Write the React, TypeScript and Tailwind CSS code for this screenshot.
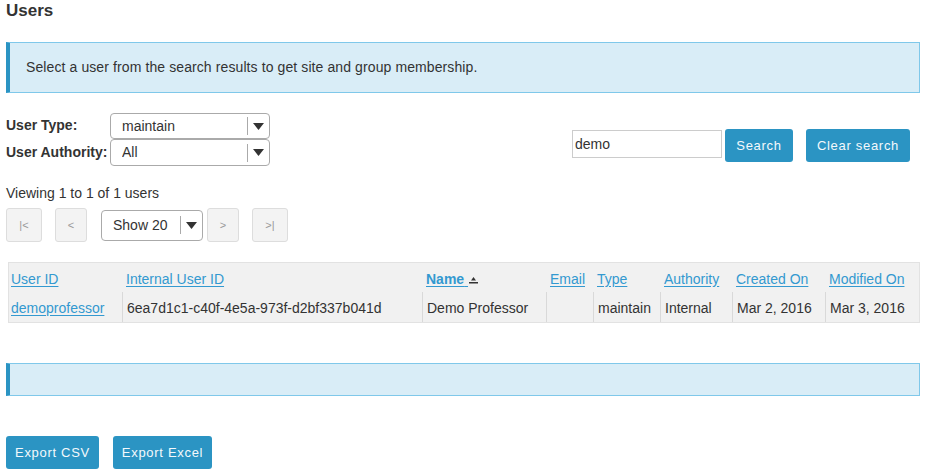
import React from "react";

const link = "text-[#3399d0] underline underline-offset-2";

function Select({ value, className }: { value: string; className: string }) {
  return (
    <div className={`flex items-center rounded-[4px] border border-[#aaa] bg-white ${className}`}>
      <span className="flex-1 truncate">{value}</span>
      <span className="h-[18px] border-l border-[#aaa]" />
      <span className="flex w-[21px] justify-center">
        <svg width="11" height="7" viewBox="0 0 11 7">
          <path d="M0 0h11L5.5 7z" fill="#333" />
        </svg>
      </span>
    </div>
  );
}

function PageBtn({ label, className }: { label: string; className: string }) {
  return (
    <div className={`flex h-[34px] items-center justify-center rounded-[3px] border border-[#ddd] bg-[#f3f3f3] text-[11px] text-[#999] ${className}`}>
      {label}
    </div>
  );
}

function Btn({ label, className = "" }: { label: string; className?: string }) {
  return (
    <button className={`h-[33px] shrink-0 whitespace-nowrap rounded-[3px] bg-[#2b94c3] text-center text-[13px] tracking-[0.7px] text-[#f4f9fc] antialiased ${className}`}>
      {label}
    </button>
  );
}

const cols = [
  { h: "User ID", v: "demoprofessor", w: "w-[113px] pl-[2px]", link: true },
  { h: "Internal User ID", v: "6ea7d1c1-c40f-4e5a-973f-d2bf337b041d", w: "w-[300px] pl-[4px]" },
  { h: "Name", v: "Demo Professor", w: "w-[124px] pl-[4px]", sort: true },
  { h: "Email", v: "", w: "w-[47px] pl-[4px]" },
  { h: "Type", v: "maintain", w: "w-[67px] pl-[4px]" },
  { h: "Authority", v: "Internal", w: "w-[72px] pl-[4px]" },
  { h: "Created On", v: "Mar 2, 2016", w: "w-[93px] pl-[4px]" },
  { h: "Modified On", v: "Mar 3, 2016", w: "flex-1 pl-[4px]" },
];

export default function App() {
  return (
    <div className="h-[474px] w-[925px] overflow-hidden bg-white font-['Liberation_Sans',Arial,sans-serif] text-[14px] text-[#333]">
      <div className="pl-[6px] pr-[5px]">
        <h1 className="pt-[1px] text-[17px] font-bold leading-[20px]">Users</h1>

        <div className="mt-[21px] flex h-[51px] items-center border border-l-[4px] border-[#7fc8ea] border-l-[#2b94c3] bg-[#d9edf7] pl-[16px] text-[14px] tracking-[0.1px]">
          Select a user from the search results to get site and group membership.
        </div>

        <div className="mt-[20px] flex">
          <div className="flex flex-col">
            <div className="flex h-[26px] items-start">
              <span className="w-[104px] pt-[2px] font-bold">User Type:</span>
              <Select value="maintain" className="h-[26px] w-[160px] pl-[11px]" />
            </div>
            <div className="flex h-[27px] items-start">
              <span className="w-[104px] pt-[3px] font-bold">User Authority:</span>
              <Select value="All" className="h-[27px] w-[160px] pl-[11px]" />
            </div>
          </div>
          <div className="ml-auto mr-[10px] flex items-start pt-[17px]">
            <input
              defaultValue="demo"
              className="h-[28px] w-[150px] border border-[#ccc] px-[2px] text-[14px] text-[#333] outline-none"
            />
            <Btn label="Search" className="-mt-[1px] ml-[3px] w-[68px]" />
            <Btn label="Clear search" className="-mt-[1px] ml-[13px] w-[104px]" />
          </div>
        </div>

        <div className="mt-[19px] leading-[16px]">Viewing 1 to 1 of 1 users</div>

        <div className="mt-[7px] flex items-center">
          <PageBtn label="|<" className="w-[36px]" />
          <PageBtn label="<" className="ml-[13px] w-[32px]" />
          <Select value="Show 20" className="ml-[14px] h-[31px] w-[102px] pl-[11px]" />
          <PageBtn label=">" className="ml-[4px] w-[32px]" />
          <PageBtn label=">|" className="ml-[13px] w-[36px]" />
        </div>

        <div className="ml-[2px] mt-[20px] border border-[#e2e2e2] bg-[#f1f1f1]">
          <div className="flex h-[29px] items-center">
            {cols.map((c) => (
              <div key={c.h} className={`${c.w} shrink-0 pt-[3px]`}>
                <span className={`${link} ${c.sort ? "font-bold" : ""}`}>
                  {c.h}
                  {c.sort ? "\u00a0" : ""}
                </span>
                {c.sort && (
                  <svg className="ml-[1px] inline-block align-middle" width="9" height="9" viewBox="0 0 9 9">
                    <path d="M4.5 2L7 5.5H2z" fill="#333" />
                    <rect x="0" y="7" width="9" height="1.5" fill="#333" />
                  </svg>
                )}
              </div>
            ))}
          </div>
          <div className="flex h-[30px]">
            {cols.map((c, i) => (
              <div
                key={c.h}
                className={`${c.w} flex shrink-0 items-center pt-[2px] ${i > 0 ? "border-l border-[#d9d9d9]" : ""}`}
              >
                <span className={c.link ? link : ""}>{c.v}</span>
              </div>
            ))}
          </div>
        </div>

        <div className="mt-[40px] h-[33px] border border-l-[4px] border-[#7fc8ea] border-l-[#2b94c3] bg-[#d9edf7]" />

        <div className="mt-[40px] flex gap-[14px]">
          <Btn label="Export CSV" className="w-[93px]" />
          <Btn label="Export Excel" className="w-[99px]" />
        </div>
      </div>
    </div>
  );
}
